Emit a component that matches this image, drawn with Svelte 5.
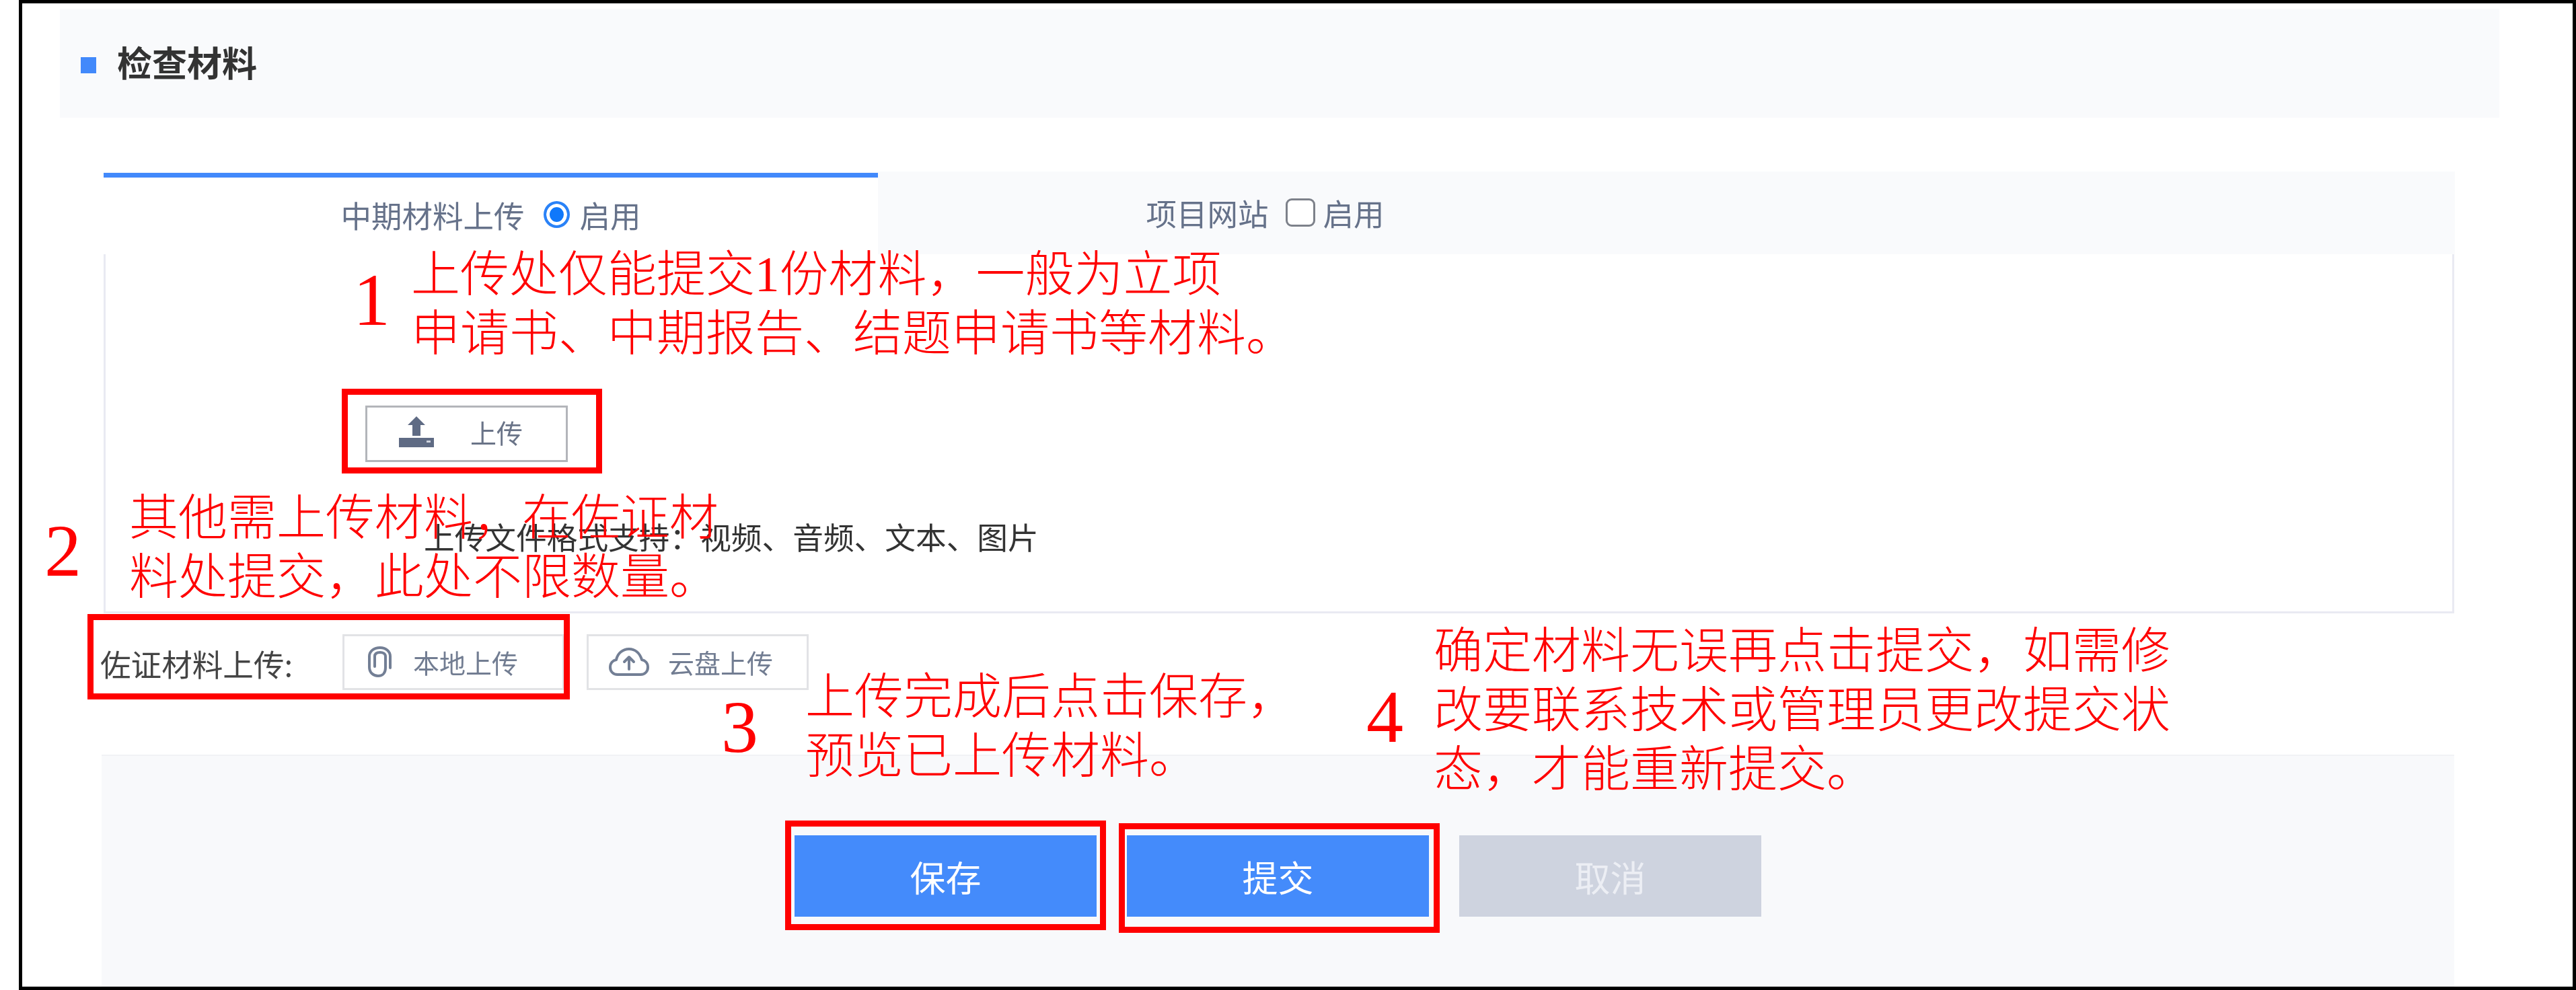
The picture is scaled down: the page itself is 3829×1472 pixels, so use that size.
<script>
  let tabs = [
    { name: "中期材料上传", kind: "radio", active: true },
    { name: "项目网站", kind: "check", active: false }
  ];

  let notes = [
    { id: "n1", lines: ["上传处仅能提交1份材料，一般为立项", "申请书、中期报告、结题申请书等材料。"] },
    { id: "n2", lines: ["其他需上传材料，在佐证材", "料处提交，此处不限数量。"] },
    { id: "n3", lines: ["上传完成后点击保存，", "预览已上传材料。"] },
    { id: "n4", lines: ["确定材料无误再点击提交，如需修", "改要联系技术或管理员更改提交状", "态，才能重新提交。"] }
  ];

  let digits = [
    { id: "d1", text: "1" },
    { id: "d2", text: "2" },
    { id: "d3", text: "3" },
    { id: "d4", text: "4" }
  ];

  let boxes = ["b1", "b2", "b3", "b4"];
</script>

<div class="frame">
  <div class="base">
    <header class="head">
      <i class="mark"></i>
      <h2>检查材料</h2>
    </header>

    <div class="tabs">
      {#each tabs as tab}
        <div class="tab" class:active={tab.active}>
          <span>{tab.name}</span>
          {#if tab.kind === "radio"}
            <i class="radio"></i>
          {:else}
            <i class="check"></i>
          {/if}
          <span>启用</span>
        </div>
      {/each}
    </div>

    <section class="panel">
      <button class="upload">
        <svg width="52" height="46" viewBox="0 0 52 46">
          <path d="M26 0 L39 13 L32 13 L32 29 L20 29 L20 13 L13 13 Z" fill="#5f6b84" />
          <rect x="0" y="32" width="52" height="14" fill="#5f6b84" />
          <rect x="41" y="36" width="6" height="3" fill="#cfd4de" />
        </svg>
        <span>上传</span>
      </button>
      <p class="hint">上传文件格式支持：视频、音频、文本、图片</p>
    </section>

    <div class="proof">
      <span class="label">佐证材料上传:</span>
      <button class="plain local">
        <svg width="38" height="46" viewBox="0 0 38 46" fill="none" stroke="#737f95" stroke-width="4" stroke-linecap="round">
          <path d="M34 32 V15 C34 7 27 2 19 2 C10 2 3 7 3 15 V31 C3 39 9 44 16 44 C23 44 27 39 27 32 V15 C27 11 23 9 19 9 C14 9 11 11 11 15 V30" />
        </svg>
        <span>本地上传</span>
      </button>
      <button class="plain cloud">
        <svg width="60" height="42" viewBox="0 0 60 42" fill="none" stroke="#737f95" stroke-width="4" stroke-linecap="round" stroke-linejoin="round">
          <path d="M13 40 C6 40 2 35 2 29 C2 23 6 19 11 18 C13 8 21 2 30 2 C39 2 46 8 49 18 C54 19 58 23 58 29 C58 35 54 40 47 40 Z" />
          <path d="M30 32 V15 M23 21 L30 14 L37 21" />
        </svg>
        <span>云盘上传</span>
      </button>
    </div>

    <footer class="foot">
      <button class="act primary">保存</button>
      <button class="act primary">提交</button>
      <button class="act muted">取消</button>
    </footer>
  </div>

  {#each boxes as box}
    <div class="box {box}"></div>
  {/each}

  {#each digits as d}
    <div class="digit {d.id}">{d.text}</div>
  {/each}

  {#each notes as note}
    <div class="note {note.id}">
      {#each note.lines as line}
        <div>{line}</div>
      {/each}
    </div>
  {/each}
</div>

<style>
  :global(body) {
    margin: 0;
    background: #fff;
  }

  .frame {
    position: relative;
    box-sizing: border-box;
    width: 3801px;
    height: 1472px;
    margin-left: 28px;
    border: 5px solid #000;
    background: #fff;
    overflow: hidden;
    font-family: "Noto Sans CJK SC", "Liberation Sans", sans-serif;
  }

  .base {
    display: flex;
    flex-direction: column;
    height: 100%;
    filter: blur(0.7px);
  }

  .head {
    display: flex;
    align-items: center;
    gap: 31px;
    box-sizing: border-box;
    width: 3626px;
    height: 162px;
    margin: 8px 0 0 56px;
    padding-left: 31px;
    background: #f9fafc;
  }

  .mark {
    width: 23px;
    height: 24px;
    margin-top: 6px;
    background: #4289fb;
  }

  h2 {
    margin: -4px 0 0;
    font-size: 52px;
    line-height: 60px;
    font-weight: 700;
    color: #333;
  }

  .tabs {
    display: flex;
    width: 3495px;
    height: 123px;
    margin: 80px 0 0 121px;
    background: #f9fafc;
  }

  .tab {
    display: flex;
    align-items: center;
    justify-content: center;
    box-sizing: border-box;
    width: 1151px;
    padding-bottom: 1px;
    font-size: 45.5px;
    color: #66728a;
  }

  .tab.active {
    background: #fff;
    border-top: 7px solid #4289fb;
    margin-top: 2px;
    padding-bottom: 4px;
  }

  .radio {
    box-sizing: border-box;
    width: 39px;
    height: 40px;
    margin: 0 15px 0 28px;
    border: 4px solid #2a82f7;
    border-radius: 50%;
    background: #0f78fb;
    box-shadow: inset 0 0 0 5px #fff;
  }

  .check {
    box-sizing: border-box;
    width: 44px;
    height: 42px;
    margin: 0 12px 0 25px;
    border: 3px solid #7d818a;
    border-radius: 9px;
    background: #fff;
  }

  .panel {
    box-sizing: border-box;
    width: 3494px;
    height: 534px;
    margin-left: 121px;
    padding: 225px 0 0 386px;
    border: solid #e9eaf2;
    border-width: 0 3px 3px 3px;
  }

  button {
    font-family: inherit;
    cursor: pointer;
  }

  .upload {
    display: flex;
    align-items: center;
    box-sizing: border-box;
    width: 301px;
    height: 84px;
    padding: 0 0 6px 47px;
    border: 3px solid #b3b5ba;
    background: #fff;
    font-size: 39px;
    color: #6a7488;
  }

  .upload span {
    margin-left: 54px;
  }

  .hint {
    margin: 83px 0 0 87px;
    font-size: 45.7px;
    line-height: 54px;
    color: #333;
  }

  .proof {
    display: flex;
    align-items: center;
    height: 83px;
    margin: 31px 0 0 116px;
  }

  .label {
    width: 360px;
    font-size: 45.6px;
    line-height: 54px;
    margin-top: 3px;
    color: #444;
  }

  .plain {
    display: flex;
    align-items: center;
    box-sizing: border-box;
    width: 330px;
    height: 83px;
    padding-bottom: 2px;
    border: 3px solid #e2e3e6;
    background: #fff;
    font-size: 39px;
    color: #727d92;
  }

  .local {
    padding-left: 34px;
    gap: 30px;
  }

  .cloud {
    margin-left: 33px;
    padding-left: 30px;
    gap: 28px;
  }

  .foot {
    display: flex;
    justify-content: center;
    gap: 45px;
    box-sizing: border-box;
    width: 3497px;
    flex: 1;
    margin: 96px 0 0 118px;
    padding-top: 118px;
    background: #f8f9fb;
    border-top: 2px solid #f1f2f5;
  }

  .act {
    width: 449px;
    height: 121px;
    border: 0;
    font-size: 53px;
    color: #fff;
  }

  .primary {
    background: #448bfb;
  }

  .muted {
    background: #ced3df;
    color: #eceef4;
  }

  /* red annotations drawn on top of the page */
  .box {
    position: absolute;
    box-sizing: border-box;
    border: 9px solid #f00;
  }

  .b1 { left: 475px; top: 573px; width: 387px; height: 126px; }
  .b2 { left: 97px; top: 908px; width: 717px; height: 127px; }
  .b3 { left: 1134px; top: 1215px; width: 477px; height: 163px; }
  .b4 { left: 1630px; top: 1219px; width: 477px; height: 163px; }

  .digit {
    position: absolute;
    font-family: "Liberation Serif", serif;
    font-size: 110px;
    line-height: 110px;
    color: #f00;
  }

  .d1 { left: 492px; top: 386px; }
  .d2 { left: 33px; top: 759px; }
  .d3 { left: 1039px; top: 1021px; }
  .d4 { left: 1998px; top: 1006px; }

  .note {
    position: absolute;
    font-family: "Liberation Serif", "Noto Sans CJK SC", serif;
    font-size: 73px;
    line-height: 88px;
    font-weight: 300;
    white-space: nowrap;
    color: #f00;
  }

  .n1 { left: 578px; top: 360px; }
  .n2 { left: 159px; top: 722px; }
  .n3 { left: 1164px; top: 988px; }
  .n4 { left: 2098px; top: 920px; }
</style>
